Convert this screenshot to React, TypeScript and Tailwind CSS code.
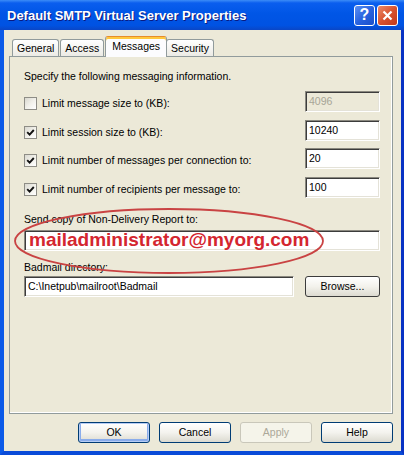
import React from "react";

const ui = "font-['Liberation_Sans',Arial,sans-serif] text-[10.5px] leading-[13px] text-black";

function CheckBox({ checked }: { checked: boolean }) {
  return (
    <span className="w-[13px] h-[13px] shrink-0 border border-[#8e8d86] bg-gradient-to-br from-[#d9d8d0] via-[#f1f0ea] to-white flex items-center justify-center">
      {checked && (
        <svg width="9" height="9" viewBox="0 0 9 9">
          <path d="M1.2 4.2 L3.6 6.6 L7.8 2" fill="none" stroke="#121212" strokeWidth="1.9" />
        </svg>
      )}
    </span>
  );
}

function Field({ value, disabled, className }: { value: string; disabled?: boolean; className: string }) {
  return (
    <div
      className={`h-[21px] flex items-center pl-[3px] border border-t-[#8a887f] border-l-[#8a887f] border-b-white border-r-white shadow-[inset_1px_1px_0_#3c3c3c,inset_-1px_-1px_0_#e4e2d8] ${
        disabled ? "bg-[#ece9d8] text-[#a7a597]" : "bg-white"
      } ${className}`}
    >
      {value}
    </div>
  );
}

function Row({ label, checked, value, disabled, top }: { label: string; checked: boolean; value: string; disabled?: boolean; top: string }) {
  return (
    <div className={`flex items-center justify-between ${top}`}>
      <div className="flex items-center gap-[5px] mt-[4px]">
        <CheckBox checked={checked} />
        <span>{label}</span>
      </div>
      <Field value={value} disabled={disabled} className="w-[75px]" />
    </div>
  );
}

function Btn({ label, variant }: { label: string; variant?: "default" | "disabled" }) {
  const base = "w-[72px] h-[21px] rounded-[3px] border flex items-center justify-center";
  if (variant === "disabled")
    return <div className={`${base} border-[#c9c7ba] bg-[#f5f4ea] text-[#aca899]`}>{label}</div>;
  return (
    <div
      className={`${base} border-[#003c74] bg-gradient-to-b from-white via-[#f4f3ee] to-[#dcdad0] ${
        variant === "default" ? "shadow-[inset_0_0_0_1px_#b7cdf5,inset_0_-1px_0_2px_#8aaceb]" : ""
      }`}
    >
      {label}
    </div>
  );
}

function Tab({ label, selected }: { label: string; selected?: boolean }) {
  if (selected)
    return (
      <div className="relative z-10 -mr-px -mb-px h-[21px] px-[6px] pt-[3px] bg-[#fcfcfe] border border-b-0 border-[#919b9c] rounded-t-[3px] shadow-[inset_0_2px_0_#ffc83c] border-t-[#e68b2c]">
        {label}
      </div>
    );
  return (
    <div className="h-[17px] px-[4px] pt-[2px] mr-px border border-b-0 border-[#919b9c] rounded-t-[3px] bg-gradient-to-b from-white to-[#ecebe5]">
      {label}
    </div>
  );
}

export default function App() {
  return (
    <div className={`w-[404px] h-[455px] flex flex-col ${ui}`}>
      {/* title bar */}
      <div className="h-[30px] shrink-0 flex items-center pl-[7px] pr-[6px] bg-[linear-gradient(to_bottom,#3c8cf7_0%,#0a5eee_10%,#0056e6_45%,#0052e2_85%,#0a46c6_100%)]">
        <span className="flex-1 text-white font-bold text-[13px] [text-shadow:1px_1px_0_#0a1a80]">
          Default SMTP Virtual Server Properties
        </span>
        <div className="w-[21px] h-[21px] rounded-[3px] border border-white bg-gradient-to-br from-[#5c8ff2] via-[#2863e0] to-[#1b4fc9] flex items-center justify-center text-white font-bold text-[16px] leading-none">
          ?
        </div>
        <div className="ml-[2px] w-[21px] h-[21px] rounded-[3px] border border-white bg-gradient-to-br from-[#e98a68] via-[#d9522e] to-[#c2381a] flex items-center justify-center">
          <svg width="11" height="11" viewBox="0 0 11 11">
            <path d="M1.5 1.5 L9.5 9.5 M9.5 1.5 L1.5 9.5" stroke="white" strokeWidth="2.2" />
          </svg>
        </div>
      </div>

      {/* client */}
      <div className="flex-1 flex flex-col bg-[#ece9d8] border-l-4 border-l-[#0b5ae8] border-r-[3px] border-r-[#0832c4] border-b-4 border-b-[#0a4bd8] pl-[5px] pr-[8px]">
        <div className="flex items-end h-[26px] pl-[3px]">
          <Tab label="General" />
          <Tab label="Access" />
          <Tab label="Messages" selected />
          <Tab label="Security" />
        </div>

        <div className="relative h-[358px] border border-[#919b9c] shadow-[inset_-1px_-1px_0_#ffffff] pl-[14px] pr-[12px] pt-[13px]">
          <div>Specify the following messaging information.</div>

          <Row top="mt-[8px]" label="Limit message size to (KB):" checked={false} value="4096" disabled />
          <Row top="mt-[8px]" label="Limit session size to (KB):" checked value="10240" />
          <Row top="mt-[7px]" label="Limit number of messages per connection to:" checked value="20" />
          <Row top="mt-[8px]" label="Limit number of recipients per message to:" checked value="100" />

          <div className="mt-[15px]">Send copy of Non-Delivery Report to:</div>
          <div className="mt-[4px] relative">
            <Field value="" className="w-full" />
            <span className="absolute left-[5px] top-[-1px] font-bold text-[19px] leading-[22px] text-[#d4262f] [text-shadow:0_0_2px_#ffffff]">
              mailadministrator@myorg.com
            </span>
          </div>

          <div className="mt-[10px]">Badmail directory:</div>
          <div className="mt-[2px] flex justify-between">
            <Field value="C:\Inetpub\mailroot\Badmail" className="w-[270px]" />
            <div className="w-[75px] h-[21px] rounded-[3px] border border-[#3c3c3c] bg-gradient-to-b from-white via-[#f3f2ec] to-[#dddbd1] flex items-center justify-center">
              Browse...
            </div>
          </div>

          {/* red annotation ellipse */}
          <svg className="absolute left-[3px] top-[149px] pointer-events-none" width="314" height="70" viewBox="0 0 314 70">
            <ellipse cx="156" cy="35" rx="154" ry="32" fill="none" stroke="#c94343" strokeWidth="1.8" />
          </svg>
        </div>

        <div className="flex justify-end gap-[9px] mt-[8px]">
          <Btn label="OK" variant="default" />
          <Btn label="Cancel" />
          <Btn label="Apply" variant="disabled" />
          <Btn label="Help" />
        </div>
      </div>
    </div>
  );
}
